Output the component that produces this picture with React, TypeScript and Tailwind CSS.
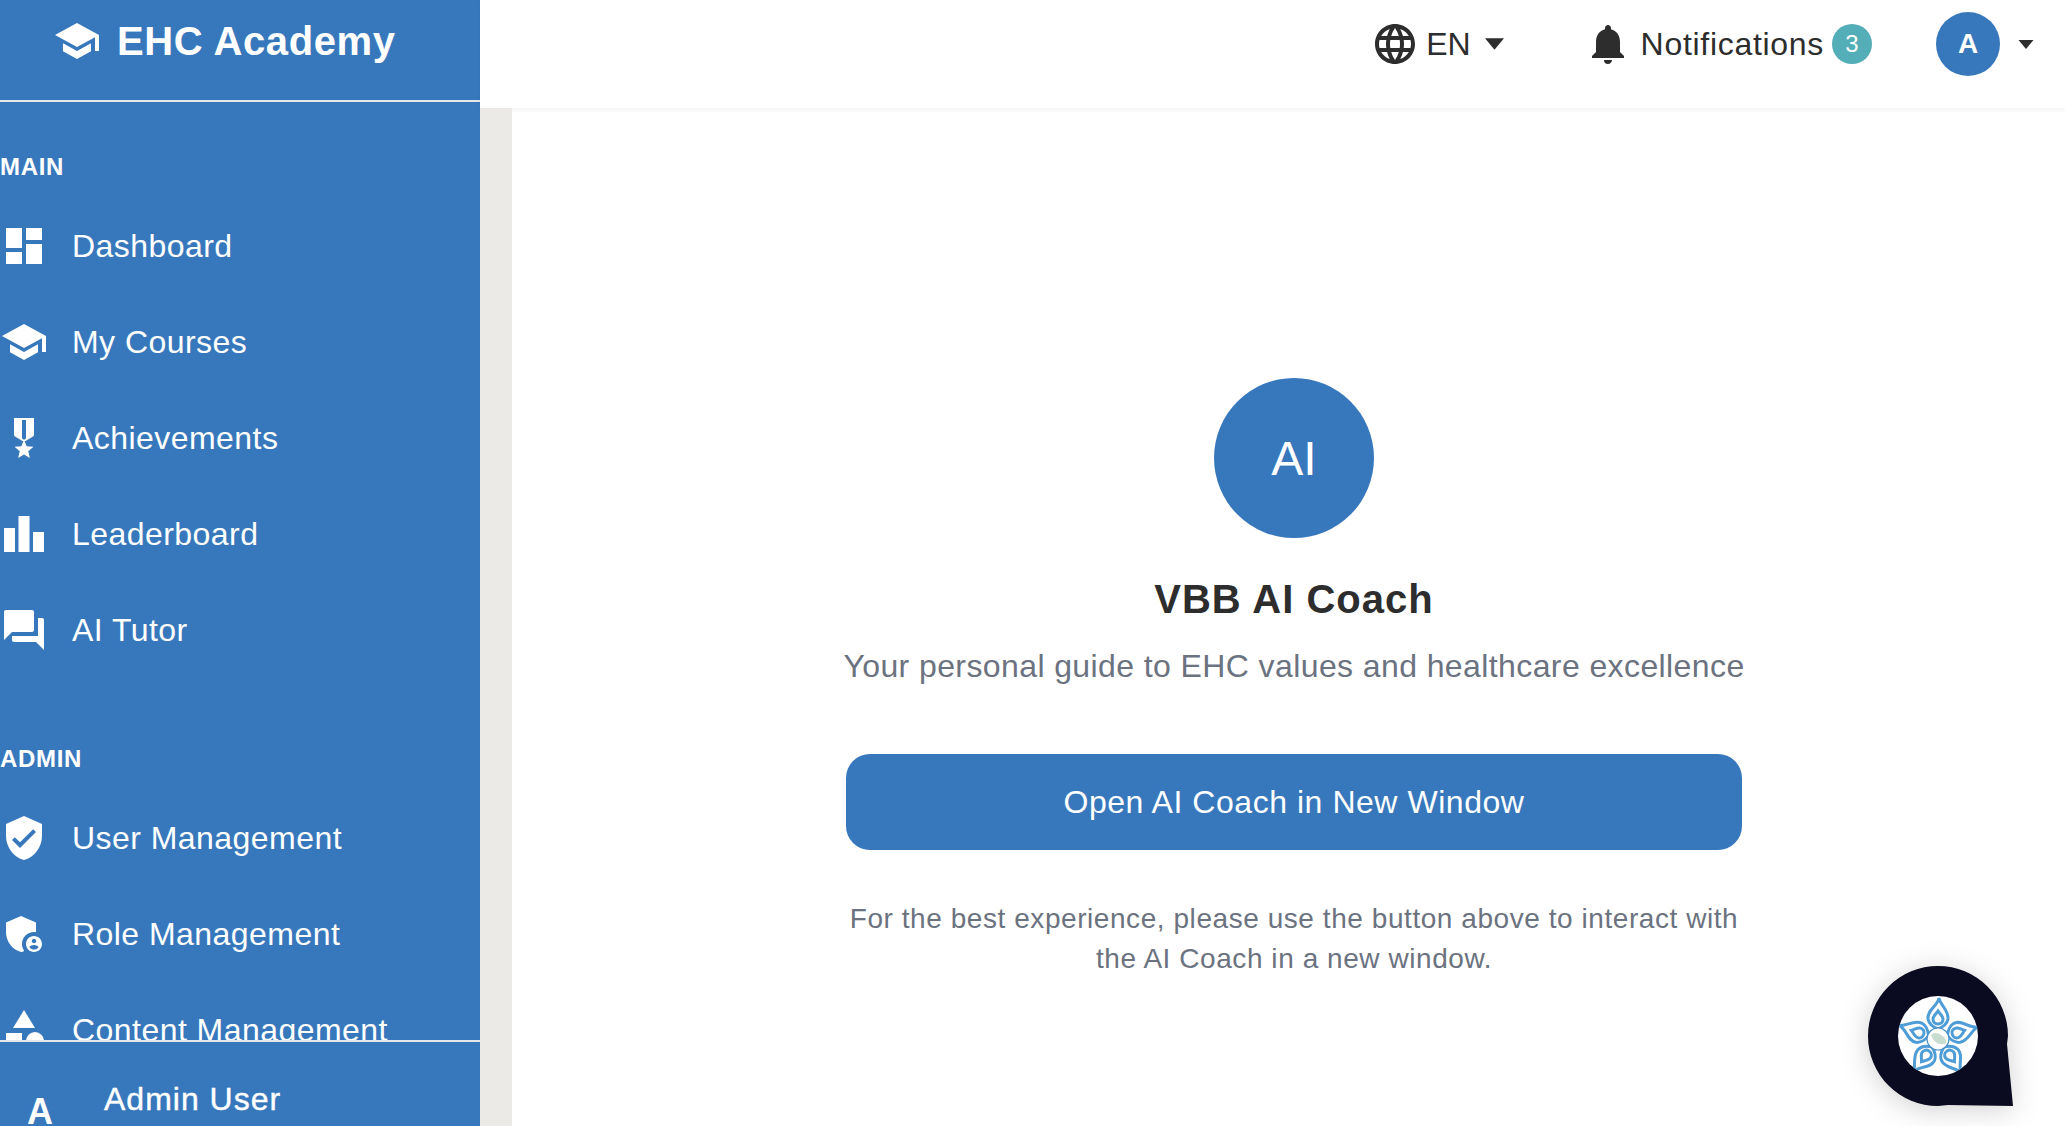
import React from "react";
import {
  MdDashboard, MdSchool, MdMilitaryTech, MdLeaderboard, MdForum, MdVerifiedUser,
  MdAdminPanelSettings, MdCategory, MdLanguage, MdNotifications,
} from "react-icons/md";

const font = { fontFamily: '"Liberation Sans", Arial, sans-serif' };

function NavItem({ icon: Icon, label }: { icon: React.ComponentType<{ size?: number }>; label: string }) {
  return (
    <div className="flex h-[96px] shrink-0 items-center gap-[24px] text-[32px] tracking-[0.45px] text-white">
      <Icon size={48} />
      <span className="whitespace-nowrap">{label}</span>
    </div>
  );
}

function Label({ children }: { children: React.ReactNode }) {
  return <div className="mb-[13px] h-[37px] pt-[1px] text-[24px] leading-[36px] font-bold tracking-[0.7px] text-white">{children}</div>;
}

function Caret({ className }: { className: string }) {
  return (
    <svg className={className} viewBox="0 0 20 12" fill="#2d2d2d">
      <polygon points="0,0 20,0 10,12" />
    </svg>
  );
}

function Logo() {
  const angles = [0, 72, 144, 216, 288];
  return (
    <svg className="absolute top-[36px] left-[38px] h-[80px] w-[80px]" viewBox="0 0 80 80">
      <defs>
        <clipPath id="badge-clip">
          <circle cx="40" cy="40" r="40" />
        </clipPath>
      </defs>
      <circle cx="40" cy="40" r="40" fill="#fff" />
      <g clipPath="url(#badge-clip)">
        {angles.map((a) => (
          <g key={a} transform={`rotate(${a} 40 43)`} fill="none" stroke="#4f9dd6" strokeWidth="3">
            <path d="M41 2 C42 9 51 14 50 23 C49 28 45 31 40 33 C35 31 31 28 30 23 C29 14 39 11 41 2 Z" />
            <path d="M40 15 C42 18 45 20 45 23 C45 26 43 28 40 28 C37 28 35 26 35 23 C35 20 38 18 40 15 Z" />
          </g>
        ))}
      </g>
      <circle cx="40" cy="43" r="11" fill="#fff" stroke="#4a8fc9" strokeWidth="1.2" />
      <path d="M33 39 C36 36 40 37 43 39 C46 41 49 44 48 47 C45 49 41 48 39 47 C36 45 34 42 33 39 Z" fill="#c8dcd0" />
    </svg>
  );
}

export default function App() {
  return (
    <div className="flex h-screen w-full overflow-hidden bg-white text-[#2d2d2d]" style={font}>
      <aside className="flex h-full w-[480px] shrink-0 flex-col bg-[#3778bc] text-white">
        <div className="flex h-[102px] shrink-0 items-start gap-[16px] border-b-2 border-[#e5e7eb] pt-[17px] pl-[53px]">
          <MdSchool size={48} />
          <span className="text-[40px] leading-[48px] font-bold tracking-[0.6px] whitespace-nowrap">EHC Academy</span>
        </div>
        <nav className="min-h-0 flex-1 overflow-hidden pt-[46px]">
          <Label>MAIN</Label>
          <NavItem icon={MdDashboard} label="Dashboard" />
          <NavItem icon={MdSchool} label="My Courses" />
          <NavItem icon={MdMilitaryTech} label="Achievements" />
          <NavItem icon={MdLeaderboard} label="Leaderboard" />
          <NavItem icon={MdForum} label="AI Tutor" />
          <div className="h-[62px]" />
          <Label>ADMIN</Label>
          <NavItem icon={MdVerifiedUser} label="User Management" />
          <NavItem icon={MdAdminPanelSettings} label="Role Management" />
          <NavItem icon={MdCategory} label="Content Management" />
        </nav>
        <div className="flex h-[86px] shrink-0 gap-[24px] overflow-hidden border-t-2 border-[#e5e7eb] pt-[37px]">
          <div className="flex h-[66px] w-[80px] shrink-0 items-center justify-center text-[36px] font-bold">A</div>
          <div className="text-[32px] leading-[40px] tracking-[1px] [-webkit-text-stroke:0.4px_white]">Admin User</div>
        </div>
      </aside>

      <div className="flex min-w-0 flex-1 flex-col">
        <header className="flex h-[108px] shrink-0 items-center justify-end pr-[32px] pb-[20px] shadow-[0_2px_4px_rgba(0,0,0,0.05)]">
          <MdLanguage size={48} className="text-[#2d2d2d]" />
          <span className="ml-[7px] text-[32px] leading-[48px]">EN</span>
          <Caret className="ml-[14px] h-[12px] w-[19px]" />
          <MdNotifications size={48} className="ml-[80px] text-[#2d2d2d]" />
          <span className="ml-[9px] text-[32px] leading-[48px] tracking-[0.7px]">Notifications</span>
          <span className="ml-[8px] flex h-[40px] w-[40px] items-center justify-center rounded-full bg-[#54aeb8] text-[24px] text-white">3</span>
          <span className="ml-[64px] flex h-[64px] w-[64px] items-center justify-center rounded-full bg-[#3778bc] text-[28px] font-bold text-white">A</span>
          <Caret className="ml-[18px] h-[9px] w-[16px]" />
        </header>
        <div className="flex min-h-0 flex-1">
          <div className="w-[32px] shrink-0 bg-[#ebeae6]" />
          <main className="flex min-w-0 flex-1 flex-col items-center pt-[270px] pl-[10px]">
            <div className="flex w-[896px] flex-col items-center">
              <div className="flex h-[160px] w-[160px] items-center justify-center rounded-full bg-[#3778bc] pt-[2px] text-[48px] text-white">AI</div>
              <h1 className="mt-[31px] text-[40px] leading-[60px] font-bold tracking-[1px] whitespace-nowrap text-[#2d2d2d]">VBB AI Coach</h1>
              <p className="mt-[13px] text-[32px] leading-[48px] tracking-[0.4px] whitespace-nowrap text-[#6b7280]">Your personal guide to EHC values and healthcare excellence</p>
              <button className="mt-[64px] h-[96px] w-full rounded-[24px] bg-[#3778bc] text-[32px] tracking-[0.54px] text-white">Open AI Coach in New Window</button>
              <p className="mt-[49px] text-center text-[28px] leading-[40px] tracking-[0.56px] text-[#6b7280]">
                For the best experience, please use the button above to interact with the AI Coach in a new window.
              </p>
            </div>
          </main>
        </div>
      </div>

      <div className="fixed right-[46px] bottom-[16px] h-[150px] w-[160px] drop-shadow-[0_4px_14px_rgba(0,0,0,0.18)]">
        <svg className="h-[150px] w-[160px]" viewBox="0 0 160 150">
          <path d="M78 6 A70 70 0 0 1 148 76 L147 84 L153 146 L88 145 L78 146 A70 70 0 0 1 78 6 Z" fill="#0a0a20" />
        </svg>
        <Logo />
      </div>
    </div>
  );
}
